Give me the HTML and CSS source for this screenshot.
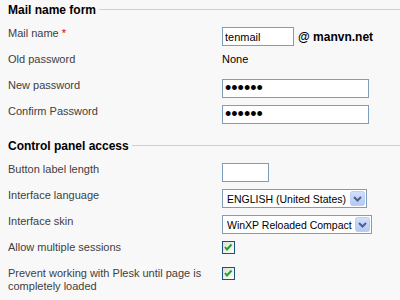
FILE: index.html
```html
<!DOCTYPE html>
<html lang="en">
<head>
    <meta charset="UTF-8">
    <title>Mail name preferences</title>
    <link rel="stylesheet" href="styles.css">
</head>
<body>
    <div class="section">
        <div class="legend"><span>Mail name form</span><i class="rule"></i></div>

        <div class="row">
            <div class="label">Mail name <span class="req">*</span></div>
            <div class="field">
                <input class="text mailname" type="text" value="tenmail">
                <b class="domain">@ manvn.net</b>
            </div>
        </div>
        <div class="row">
            <div class="label">Old password</div>
            <div class="field plain">None</div>
        </div>
        <div class="row">
            <div class="label">New password</div>
            <div class="field"><input class="text pass" type="password" value="secret"></div>
        </div>
        <div class="row">
            <div class="label">Confirm Password</div>
            <div class="field"><input class="text pass" type="password" value="secret"></div>
        </div>
    </div>

    <div class="section">
        <div class="legend"><span>Control panel access</span><i class="rule"></i></div>

        <div class="row">
            <div class="label">Button label length</div>
            <div class="field"><input class="text labellen" type="text" value=""></div>
        </div>
        <div class="row">
            <div class="label">Interface language</div>
            <div class="field">
                <div class="select lang">
                    <select>
                        <option>ENGLISH (United States)</option>
                    </select>
                    <svg class="drop" viewBox="0 0 15 15" width="15" height="15">
                        <defs>
                            <linearGradient id="btn" x1="0" y1="0" x2="0" y2="1">
                                <stop offset="0" stop-color="#d3e0fd"/>
                                <stop offset="1" stop-color="#b3c8f5"/>
                            </linearGradient>
                        </defs>
                        <rect x="0.5" y="0.5" width="14" height="14" rx="2" fill="url(#btn)" stroke="#bccdf3"/>
                        <path d="M4 6 L7.5 9.5 L11 6" fill="none" stroke="#4d6185" stroke-width="2"/>
                    </svg>
                </div>
            </div>
        </div>
        <div class="row">
            <div class="label">Interface skin</div>
            <div class="field">
                <div class="select skin">
                    <select>
                        <option>WinXP Reloaded Compact</option>
                    </select>
                    <svg class="drop" viewBox="0 0 15 15" width="15" height="15">
                        <rect x="0.5" y="0.5" width="14" height="14" rx="2" fill="url(#btn)" stroke="#bccdf3"/>
                        <path d="M4 6 L7.5 9.5 L11 6" fill="none" stroke="#4d6185" stroke-width="2"/>
                    </svg>
                </div>
            </div>
        </div>
        <div class="row">
            <div class="label">Allow multiple sessions</div>
            <div class="field">
                <svg class="check" viewBox="0 0 13 13" width="13" height="13">
                    <defs>
                        <linearGradient id="box" x1="0" y1="0" x2="1" y2="1">
                            <stop offset="0" stop-color="#dcdcd7"/>
                            <stop offset="1" stop-color="#ffffff"/>
                        </linearGradient>
                    </defs>
                    <rect x="0.5" y="0.5" width="12" height="12" fill="url(#box)" stroke="#1c5180"/>
                    <path d="M3 6 L5 8.5 L9.5 3.5" fill="none" stroke="#21a121" stroke-width="2"/>
                </svg>
            </div>
        </div>
        <div class="row">
            <div class="label">Prevent working with Plesk until page is completely loaded</div>
            <div class="field">
                <svg class="check" viewBox="0 0 13 13" width="13" height="13">
                    <rect x="0.5" y="0.5" width="12" height="12" fill="url(#box)" stroke="#1c5180"/>
                    <path d="M3 6 L5 8.5 L9.5 3.5" fill="none" stroke="#21a121" stroke-width="2"/>
                </svg>
            </div>
        </div>
    </div>
</body>
</html>
```

FILE: styles.css
```css
body {
    margin: 0;
    background: #f9f8f8;
    font-family: "Liberation Sans", Arial, sans-serif;
    font-size: 11px;
    color: #000;
}

.section {
    margin-bottom: 9px;
}

.legend {
    display: flex;
    align-items: center;
    gap: 3px;
    height: 19px;
    margin-bottom: 4px;
    padding-left: 8px;
    font-size: 12px;
    font-weight: bold;
}

.rule {
    flex: 1;
    border-top: 1px solid #d0d0d0;
}

.row {
    display: flex;
    min-height: 26px;
    padding-left: 8px;
}

.label {
    width: 214px;
    padding-top: 4px;
    line-height: 13px;
    color: #404040;
}

.req {
    color: #c00;
}

.field {
    display: flex;
    align-items: center;
    align-self: flex-start;
    padding-top: 4px;
}

.plain {
    line-height: 13px;
}

.text {
    box-sizing: border-box;
    height: 19px;
    margin: 0;
    padding: 0 2px;
    border: 1px solid #7f9db9;
    background: #fff;
    font-family: "Liberation Sans", Arial, sans-serif;
    font-size: 11px;
    color: #000;
    outline: none;
}

.mailname {
    width: 72px;
}

.pass {
    width: 147px;
    font-size: 18px;
}

.labellen {
    width: 47px;
}

.domain {
    margin-left: 4px;
    font-size: 12px;
}

.select {
    position: relative;
}

.select select {
    box-sizing: border-box;
    height: 19px;
    margin: 0;
    padding: 0 17px 0 4px;
    border: 1px solid #7f9db9;
    border-radius: 0;
    background: #fff;
    font-family: "Liberation Sans", Arial, sans-serif;
    font-size: 10.5px;
    color: #000;
    appearance: none;
    -webkit-appearance: none;
    outline: none;
}

.lang select {
    width: 145px;
}

.skin select {
    width: 150px;
}

.drop {
    position: absolute;
    top: 2px;
    right: 2px;
    pointer-events: none;
}

.check {
    display: block;
}
```
